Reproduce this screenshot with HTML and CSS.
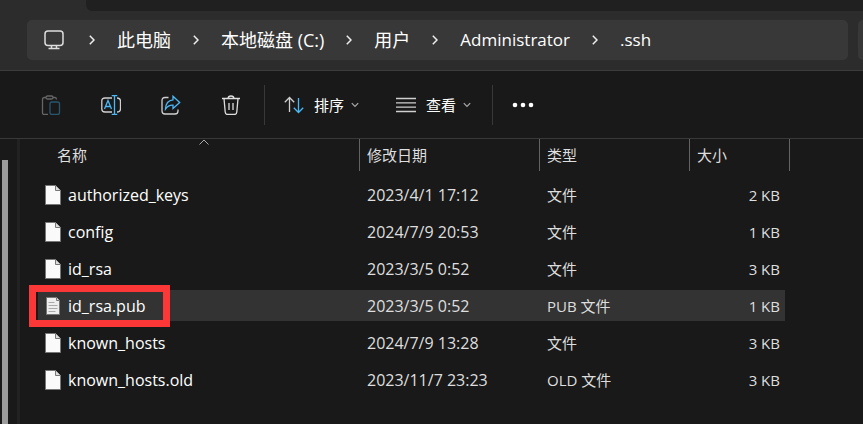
FILE: index.html
```html
<!DOCTYPE html>
<html lang="zh-CN">
<head>
<meta charset="utf-8">
<title>.ssh</title>
<link rel="stylesheet" href="styles.css">
</head>
<body>
<div class="window">
  <header class="top">
    <div class="tabs"><div class="tab"></div><div class="strip"></div></div>
    <div class="address-row">
      <nav class="address" aria-label="路径">
        <svg class="pc" viewBox="0 0 20 20"><rect x="1" y="1" width="18" height="14.5" rx="3"/><path d="M7.5 15.5v3M12.500 15.500v3M4.500 18.500h11"/></svg>
        <svg class="chev" viewBox="0 0 6 10"><path d="M.8.8 5 5 .8 9.200"/></svg>
        <a href="#" class="crumb">此电脑</a>
        <svg class="chev" viewBox="0 0 6 10"><path d="M.8.8 5 5 .8 9.200"/></svg>
        <a href="#" class="crumb">本地磁盘 (C:)</a>
        <svg class="chev" viewBox="0 0 6 10"><path d="M.8.8 5 5 .8 9.200"/></svg>
        <a href="#" class="crumb">用户</a>
        <svg class="chev" viewBox="0 0 6 10"><path d="M.8.8 5 5 .8 9.200"/></svg>
        <a href="#" class="crumb latin">Administrator</a>
        <svg class="chev" viewBox="0 0 6 10"><path d="M.8.8 5 5 .8 9.200"/></svg>
        <a href="#" class="crumb latin">.ssh</a>
      </nav>
      <div class="search"></div>
    </div>
  </header>

  <div class="toolbar">
    <button class="tool" aria-label="粘贴" disabled>
      <svg class="icon" viewBox="0 0 20 20"><g stroke="#666"><path d="M5 2.500H3.500Q1.500 2.500 1.500 4.500V18Q1.500 19.500 3.500 19.500H7M12 2.500h2q1.500 0 1.500 2"/><rect x="5" y="1" width="7" height="3" rx="1.500"/></g><rect x="9" y="7" width="9.500" height="12.500" rx="2" stroke="#28566f"/></svg>
    </button>
    <button class="tool" aria-label="重命名">
      <svg class="icon" viewBox="0 0 20 20"><path d="M11 3H4Q.8 3 .8 6v8q0 3 3.200 3H11M16 3q3.500 0 3.500 3.500v7Q19.500 17 16 17" stroke="#d0d0d0"/><path d="M3.500 14 7 5.500l3.500 8.500M4.800 11.500h4.500M13.500.7V19.300M10.700.7h5.600M10.700 19.300h5.600" stroke="#4cb8f5"/></svg>
    </button>
    <button class="tool" aria-label="共享">
      <svg class="icon" viewBox="0 0 20 20"><path d="M7.500 2.500H4Q1 2.500 1 5.500V16q0 3 3 3h10q3 0 3-3v-1.500" stroke="#d0d0d0"/><path d="M12 1.300 18.700 7.500 12 13.500V10.200Q7.500 9.800 4.500 14 4.800 5.500 12 4.800Z" stroke="#4cb8f5"/></svg>
    </button>
    <button class="tool" aria-label="删除">
      <svg class="icon" viewBox="0 0 20 20"><path d="M1 3.500h18M7 3.500Q7.200 1 10 1t3 2.500M3 3.500 4.200 17q.2 2.500 2.500 2.500h6.600q2.300 0 2.500-2.500L17 3.500M8 8v7M12 8v7" stroke="#dedede"/></svg>
    </button>
    <span class="sep"></span>
    <button class="menu">
      <svg class="icon" viewBox="0 0 20 20"><path d="M5.500 17V2.500M.8 7.200 5.500 2.500l4.700 4.700" stroke="#d0d0d0"/><path d="M14.500 3v14.500M9.800 12.800l4.700 4.700 4.700-4.700" stroke="#4cb8f5"/></svg>
      <span>排序</span>
      <svg class="down" viewBox="0 0 8 6"><path d="M.8 1.200 4 4.500 7.200 1.200"/></svg>
    </button>
    <button class="menu view">
      <svg class="icon" viewBox="0 0 20 20"><path d="M0 3.500h20M0 7.800h20M0 12.200h20M0 16.500h20" stroke="#d0d0d0"/></svg>
      <span>查看</span>
      <svg class="down" viewBox="0 0 8 6"><path d="M.8 1.200 4 4.500 7.200 1.200"/></svg>
    </button>
    <span class="sep"></span>
    <button class="menu" aria-label="更多">
      <svg class="dots" viewBox="0 0 22 6"><circle cx="3" cy="3" r="2.300"/><circle cx="11" cy="3" r="2.300"/><circle cx="19" cy="3" r="2.300"/></svg>
    </button>
  </div>

  <div class="body">
    <aside class="side"><div class="thumb"></div></aside>
    <main class="files">
      <table>
        <colgroup><col class="c-name"><col class="c-date"><col class="c-type"><col class="c-size"></colgroup>
        <thead>
          <tr>
            <th class="first"><div class="head">名称<svg class="sort-mark" viewBox="0 0 10 6"><path d="M.5 5.500 5 1l4.500 4.500"/></svg></div></th>
            <th><div class="head">修改日期</div></th>
            <th><div class="head">类型</div></th>
            <th><div class="head">大小</div></th>
          </tr>
        </thead>
        <tbody>
          <tr><td><div class="name"><svg class="doc" viewBox="0 0 16 20"><path d="M.5.5h10l5 5v14H.5z"/><path d="M10.500.5v5h5" class="fold"/></svg>authorized_keys</div></td><td class="date">2023/4/1 17:12</td><td>文件</td><td class="size">2 KB</td></tr>
          <tr><td><div class="name"><svg class="doc" viewBox="0 0 16 20"><path d="M.5.5h10l5 5v14H.5z"/><path d="M10.500.5v5h5" class="fold"/></svg>config</div></td><td class="date">2024/7/9 20:53</td><td>文件</td><td class="size">1 KB</td></tr>
          <tr><td><div class="name"><svg class="doc" viewBox="0 0 16 20"><path d="M.5.5h10l5 5v14H.5z"/><path d="M10.500.5v5h5" class="fold"/></svg>id_rsa</div></td><td class="date">2023/3/5 0:52</td><td>文件</td><td class="size">3 KB</td></tr>
          <tr class="selected"><td><span class="mark"></span><div class="name"><svg class="doc" viewBox="0 0 16 20"><path d="M1.500 1.500h10l3 3v14h-13z" fill="#eee"/><path d="M11.500 1.500v3h3" class="fold"/><path d="M3.500 6.500h6M3.500 9.500h9M3.500 12.500h9M3.500 15.500h7" stroke="#aaa"/></svg>id_rsa.pub</div></td><td class="date">2023/3/5 0:52</td><td>PUB 文件</td><td class="size">1 KB</td></tr>
          <tr><td><div class="name"><svg class="doc" viewBox="0 0 16 20"><path d="M.5.5h10l5 5v14H.5z"/><path d="M10.500.5v5h5" class="fold"/></svg>known_hosts</div></td><td class="date">2024/7/9 13:28</td><td>文件</td><td class="size">3 KB</td></tr>
          <tr><td><div class="name"><svg class="doc" viewBox="0 0 16 20"><path d="M.5.5h10l5 5v14H.5z"/><path d="M10.500.5v5h5" class="fold"/></svg>known_hosts.old</div></td><td class="date">2023/11/7 23:23</td><td>OLD 文件</td><td class="size">3 KB</td></tr>
        </tbody>
      </table>
    </main>
  </div>
</div>
</body>
</html>
```
FILE: styles.css
```css
* { box-sizing: border-box; }
body {
  margin: 0;
  background: #191919;
  color: #fff;
  font: 15px/20px "Open Sans", "Noto Sans CJK SC", sans-serif;
}
svg { display: block; flex: none; fill: none; }
button { background: none; border: 0; padding: 0; color: inherit; font: inherit; }
.window { display: flex; flex-direction: column; min-height: 100vh; overflow: hidden; }

.top { background: #2c2c2c; border-bottom: 1px solid #3c3c3c; }
.tabs { display: flex; height: 11px; }
.tab { width: 86px; }
.strip { flex: 1; background: #202020; border-bottom-left-radius: 6px; }
.address-row { display: flex; gap: 10px; padding: 9px 0 10px 27px; }
.address {
  flex: 1;
  display: flex;
  align-items: center;
  gap: 22px;
  height: 40px;
  padding-left: 17px;
  background: #383838;
  border-radius: 5px;
}
.search { width: 5px; background: #383838; border-radius: 5px 0 0 5px; }
.pc { width: 20px; height: 20px; margin-right: 3px; stroke: #ddd; stroke-width: 1.5; }
.chev { width: 6px; height: 10px; stroke: #eee; stroke-width: 1.5; }
.crumb { color: #fff; text-decoration: none; font-size: 18px; white-space: nowrap; }
.crumb.latin { font-size: 17px; }

.toolbar {
  display: flex;
  align-items: center;
  height: 68px;
  padding-left: 21px;
  border-bottom: 1px solid #393939;
}
.tool { display: flex; justify-content: center; width: 60px; }
.icon { width: 20px; height: 20px; stroke-width: 1.3; }
.sep { width: 1px; height: 40px; margin: 0 19px 0 3px; background: #383838; }
.menu { display: flex; align-items: center; gap: 10px; }
.menu span { margin-right: -3px; }
.view { margin: 0 18px 0 37px; }
.down { width: 8px; height: 6px; stroke: #aaa; stroke-width: 1.2; }
.dots { width: 22px; height: 6px; fill: #fff; }

.body { flex: 1; display: flex; }
.side { flex: none; width: 20px; padding: 21px 0 0 2px; border-right: 3px solid #222; display: flex; }
.thumb { width: 6px; background: #9b9b9b; }
.files { flex: 1; padding-left: 18px; }
table { width: 752px; table-layout: fixed; border-collapse: separate; border-spacing: 0; }
.c-name { width: 322px; }
.c-date { width: 180px; }
.c-type { width: 150px; }
.c-size { width: 100px; }
th { padding: 0 0 5px; font-weight: 400; text-align: left; color: #dedede; }
.head { position: relative; height: 32px; padding: 6px 7px; border-right: 1px solid #636363; }
.first .head { padding-left: 19px; }
.sort-mark { position: absolute; top: 0; left: 50%; width: 10px; height: 6px; stroke: #aaa; }
td {
  position: relative;
  height: 37px;
  padding: 0 7px;
  border: 3px solid transparent;
  border-width: 3px 0;
  background-clip: padding-box;
  color: #dedede;
}
.name { display: flex; align-items: center; gap: 7px; color: #fff; font-size: 16px; }
.doc { width: 16px; height: 20px; fill: #fafafa; stroke: #777; }
.doc .fold { fill: #ddd; }
.date { font-size: 16px; }
.size { text-align: right; padding-right: 5px; border-right-width: 5px; }
.selected td { background-color: #333; }
.mark { position: absolute; left: -9px; top: -5px; width: 141px; height: 42px; border: 7px solid #fc3737; }
```
